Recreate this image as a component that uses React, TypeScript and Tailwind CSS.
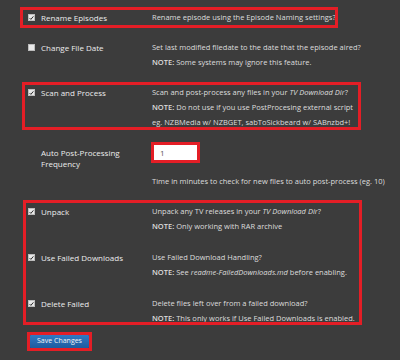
import React from "react";

const font = { fontFamily: '"Open Sans", "Liberation Sans", sans-serif' };

const Check = ({ checked }: { checked: boolean }) => (
  <span className="w-[7px] h-[7px] bg-[#e9e9e9] border border-[#bdbdbd] flex items-center justify-center shrink-0">
    {checked && (
      <svg viewBox="0 0 8 8" className="w-[6px] h-[6px]">
        <path d="M1 4.2 L3 6.2 L7 1.4" fill="none" stroke="#2a2a2a" strokeWidth="1.6" />
      </svg>
    )}
  </span>
);

interface RowProps {
  label: string;
  checked?: boolean;
  lines: React.ReactNode[];
  className?: string;
}

const Row: React.FC<RowProps> = ({ label, checked, lines, className }) => (
  <div className={"flex " + (className ?? "")}>
    <div className="w-[124px] h-[15px] flex items-center gap-[6px] shrink-0">
      <Check checked={!!checked} />
      <span className="text-[8px] font-medium text-[#ececec] whitespace-nowrap">{label}</span>
    </div>
    <div className="flex flex-col">
      {lines.map((l, i) => (
        <div key={i} className="h-[15px] leading-[15px] text-[7.5px] text-[#dcdcdc] whitespace-nowrap">
          {l}
        </div>
      ))}
    </div>
  </div>
);

const Note = ({ children }: { children: React.ReactNode }) => (
  <>
    <b className="font-semibold">NOTE:</b> {children}
  </>
);

export default function App() {
  return (
    <div className="relative w-[400px] h-[360px] bg-[#3c3c3c] overflow-hidden" style={font}>
      <div className="flex flex-col gap-[15px] pl-[28px] pt-[10px]">
        <Row label="Rename Episodes" checked lines={["Rename episode using the Episode Naming settings?"]} />
        <Row
          label="Change File Date"
          lines={[
            "Set last modified filedate to the date that the episode aired?",
            <Note>Some systems may ignore this feature.</Note>,
          ]}
        />
        <Row
          label="Scan and Process"
          checked
          lines={[
            <>
              Scan and post-process any files in your <i>TV Download Dir</i>?
            </>,
            <Note>Do not use if you use PostProcesing external script</Note>,
            "eg. NZBMedia w/ NZBGET, sabToSickbeard w/ SABnzbd+!",
          ]}
        />
        <div className="flex">
          <div className="w-[124px] pl-[13px] pt-[2px] text-[8px] font-medium leading-[11px] text-[#ececec] shrink-0">
            Auto Post-Processing
            <br />
            Frequency
          </div>
          <div className="flex flex-col">
            <div className="ml-[2px] w-[43px] h-[15px] bg-white pl-[6px] text-[8px] leading-[15px] text-[#555]">1</div>
            <div className="mt-[14px] h-[15px] leading-[15px] text-[7.5px] text-[#dcdcdc] whitespace-nowrap">
              Time in minutes to check for new files to auto post-process (eg. 10)
            </div>
          </div>
        </div>
        <Row
          label="Unpack"
          checked
          lines={[
            <>
              Unpack any TV releases in your <i>TV Download Dir</i>?
            </>,
            <Note>Only working with RAR archive</Note>,
          ]}
        />
        <Row
          label="Use Failed Downloads"
          checked
          className="mt-[1px]"
          lines={[
            "Use Failed Download Handling?",
            <Note>
              See <i>readme-FailedDownloads.md</i> before enabling.
            </Note>,
          ]}
        />
        <Row
          label="Delete Failed"
          checked
          className="mt-[1px]"
          lines={[
            "Delete files left over from a failed download?",
            <Note>This only works if Use Failed Downloads is enabled.</Note>,
          ]}
        />
        <div className="-mt-[6px] pl-[2px] flex">
          <button className="w-[59px] h-[13px] flex items-center justify-center bg-gradient-to-b from-[#3079c4] to-[#1e5c9f] text-[#f4f4f4] text-[7px] rounded-[1px] whitespace-nowrap">
            Save Changes
          </button>
        </div>
      </div>

      {/* red annotation boxes */}
      <div className="absolute left-[20px] top-[7px] w-[318px] h-[21px] border-[3px] border-[#e41e26]" />
      <div className="absolute left-[22px] top-[82px] w-[339px] h-[48px] border-[3px] border-[#e41e26]" />
      <div className="absolute left-[151px] top-[142px] w-[49px] h-[21px] border-[3px] border-[#e41e26]" />
      <div className="absolute left-[23px] top-[200px] w-[339px] h-[125px] border-[3px] border-[#e41e26]" />
      <div className="absolute left-[27px] top-[332px] w-[65px] h-[19px] border-[3px] border-[#e41e26]" />
    </div>
  );
}
